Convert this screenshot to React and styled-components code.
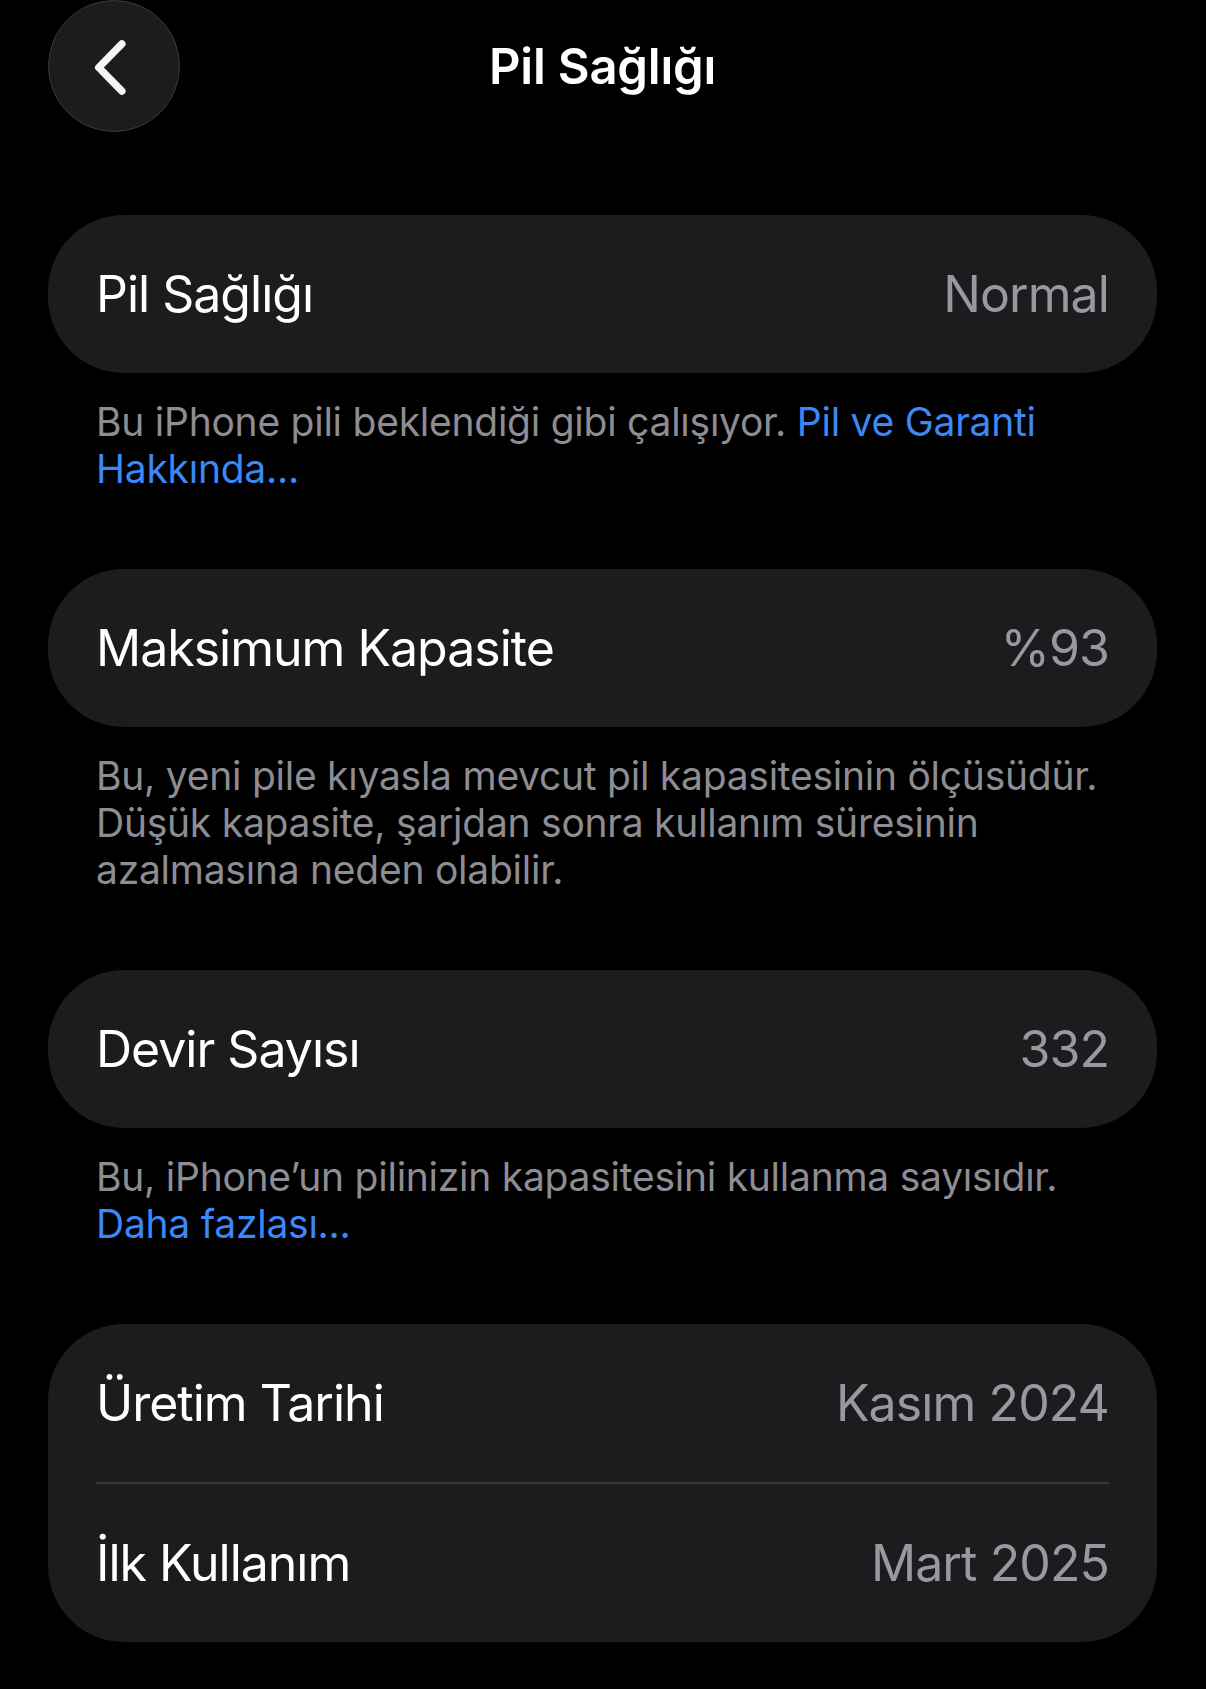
import React from "react";
import styled, { createGlobalStyle } from "styled-components";

const GlobalStyle = createGlobalStyle`
  html, body {
    margin: 0;
    padding: 0;
    background: #000;
  }
  body {
    font-family: "Inter", "Noto Sans", "Liberation Sans", sans-serif;
    color: #fff;
    -webkit-font-smoothing: antialiased;
  }
`;

const Page = styled.div`
  min-height: 1689px;
  background: #000;
  display: flex;
  flex-direction: column;
`;

const Header = styled.header`
  display: grid;
  grid-template-columns: 1fr auto 1fr;
  align-items: center;
  height: 132px;
  padding: 0 49px 0 48px;
`;

const BackButton = styled.button`
  width: 132px;
  height: 132px;
  border-radius: 50%;
  background: #1c1c1d;
  border: 1.5px solid #3a3a3b;
  box-sizing: border-box;
  padding: 0;
  display: flex;
  align-items: center;
  justify-content: center;
  cursor: pointer;
  justify-self: start;

  svg {
    display: block;
  }
`;

const Title = styled.h1`
  margin: 0;
  font-size: 49px;
  font-weight: 600;
  letter-spacing: -0.2px;
  color: #fff;
  text-align: center;
`;

const Content = styled.main`
  display: flex;
  flex-direction: column;
  gap: 77px;
  padding: 83px 49px 0 48px;
`;

const Section = styled.section`
  display: flex;
  flex-direction: column;
`;

const Card = styled.div`
  background: #1c1c1e;
  border-radius: 76px;
  display: flex;
  flex-direction: column;
`;

const Row = styled.div`
  height: 158px;
  display: flex;
  align-items: center;
  justify-content: space-between;
  padding: 0 48px;
`;

const Label = styled.span`
  font-size: 50px;
  font-weight: 400;
  letter-spacing: -1px;
  color: #fff;
`;

const Value = styled.span`
  font-size: 50px;
  font-weight: 400;
  letter-spacing: -0.9px;
  color: #98989f;
`;

const Divider = styled.div`
  height: 2px;
  margin: 0 48px;
  background: #38383a;
`;

const Footer = styled.p`
  margin: 25px 0 0;
  padding: 0 48px;
  font-size: 39px;
  line-height: 47px;
  letter-spacing: -0.25px;
  color: #8d8d93;
  white-space: nowrap;
`;

const Link = styled.a`
  color: #3b88f6;
  text-decoration: none;
`;

const Chevron = () => (
  <svg width="132" height="132" viewBox="0 0 132 132" aria-hidden="true">
    <path
      d="M74 43.5 L50.5 67.5 L74 91.5"
      fill="none"
      stroke="#f5f5f5"
      strokeWidth="7.5"
      strokeLinecap="round"
      strokeLinejoin="round"
    />
  </svg>
);

export default function App() {
  return (
    <>
      <GlobalStyle />
      <Page>
        <Header>
          <BackButton aria-label="Geri">
            <Chevron />
          </BackButton>
          <Title>Pil Sağlığı</Title>
          <span />
        </Header>
        <Content>
          <Section>
            <Card>
              <Row>
                <Label>Pil Sağlığı</Label>
                <Value>Normal</Value>
              </Row>
            </Card>
            <Footer>
              Bu iPhone pili beklendiği gibi çalışıyor. <Link>Pil ve Garanti</Link>
              <br />
              <Link>Hakkında...</Link>
            </Footer>
          </Section>
          <Section>
            <Card>
              <Row>
                <Label>Maksimum Kapasite</Label>
                <Value>%93</Value>
              </Row>
            </Card>
            <Footer>
              Bu, yeni pile kıyasla mevcut pil kapasitesinin ölçüsüdür.
              <br />
              Düşük kapasite, şarjdan sonra kullanım süresinin
              <br />
              azalmasına neden olabilir.
            </Footer>
          </Section>
          <Section>
            <Card>
              <Row>
                <Label>Devir Sayısı</Label>
                <Value>332</Value>
              </Row>
            </Card>
            <Footer>
              Bu, iPhone’un pilinizin kapasitesini kullanma sayısıdır.
              <br />
              <Link>Daha fazlası...</Link>
            </Footer>
          </Section>
          <Section>
            <Card>
              <Row>
                <Label>Üretim Tarihi</Label>
                <Value>Kasım 2024</Value>
              </Row>
              <Divider />
              <Row>
                <Label>İlk Kullanım</Label>
                <Value>Mart 2025</Value>
              </Row>
            </Card>
          </Section>
        </Content>
      </Page>
    </>
  );
}
